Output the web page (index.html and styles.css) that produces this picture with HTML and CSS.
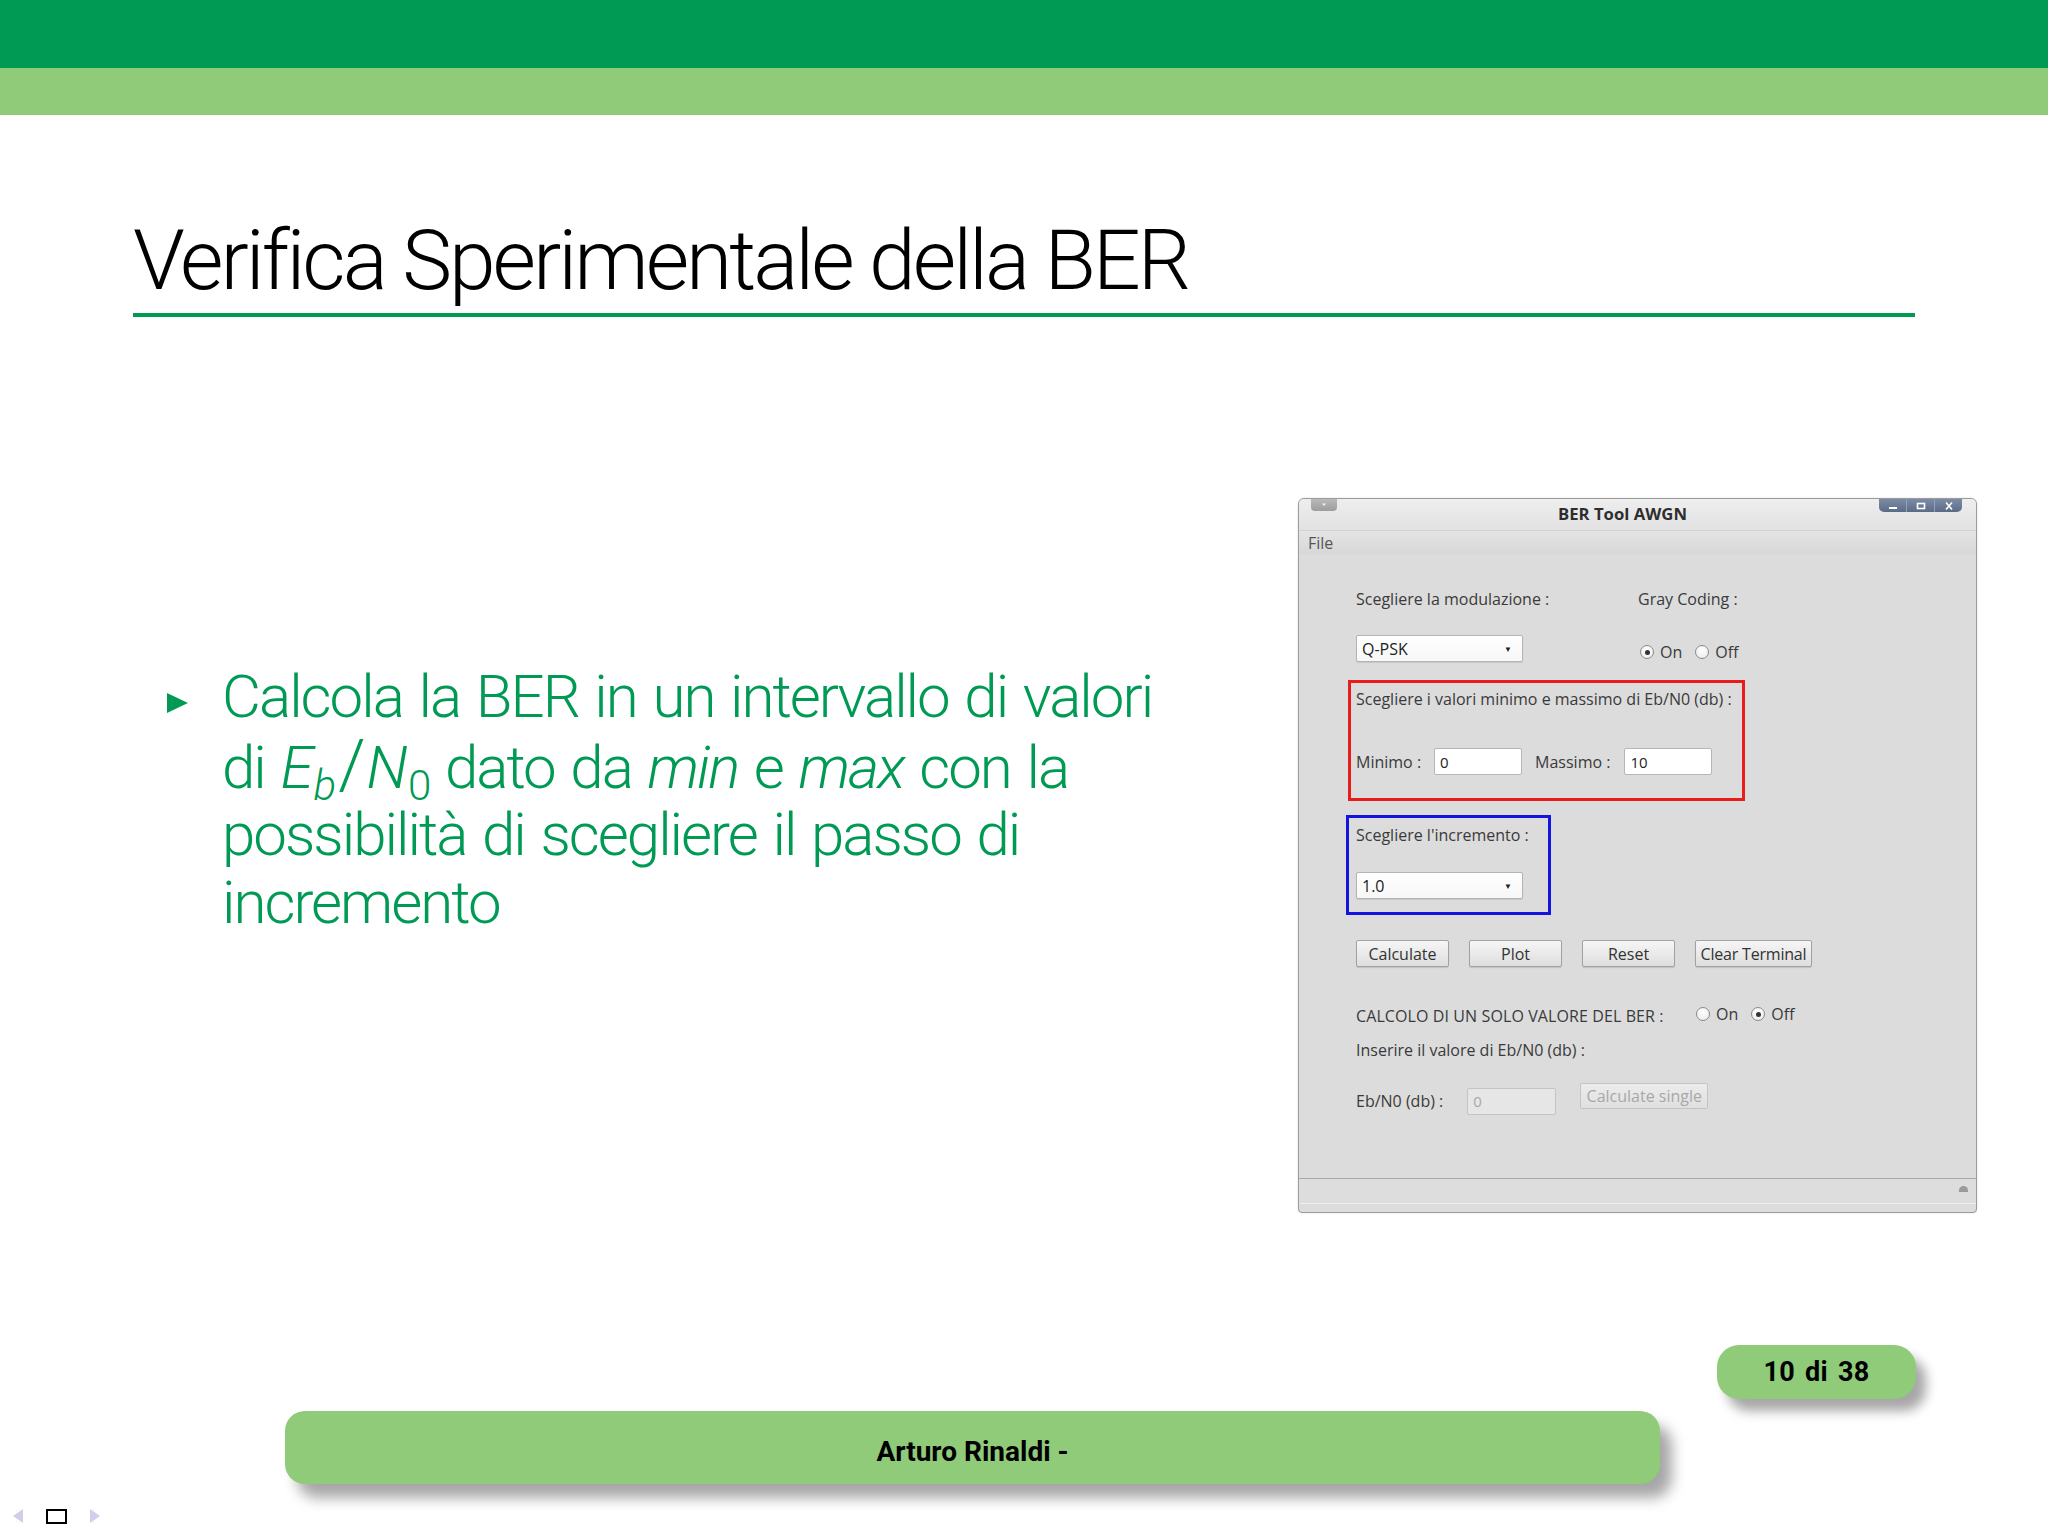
FILE: index.html
```html
<!DOCTYPE html>
<html lang="it">
<head>
<meta charset="utf-8">
<title>Verifica Sperimentale della BER</title>
<link rel="stylesheet" href="styles.css">
</head>
<body>
<div class="slide">
  <div class="hdr-dark"></div>
  <div class="hdr-light"></div>

  <div class="frametitle"><h1>Verifica Sperimentale della BER</h1></div>

  <div class="content">
    <div class="left">
      <div class="item">
        <span class="bullet"></span>
        <p>Calcola la BER in un intervallo di valori<br>di <span class="math"><i>E</i><sub><i>b</i></sub><span class="slash">/</span><i>N</i><sub>0</sub></span> dato da <i>min</i> e <i>max</i> con la<br>possibilità di scegliere il passo di<br>incremento</p>
      </div>
    </div>

    <div class="window">
      <div class="titlebar">
        <span class="tb-menu"><svg width="10" height="6" viewBox="0 0 10 6"><path d="M3 1.5 L7 1.5 L5 4 Z" fill="#f2f2f2"/></svg></span>
        <span class="tb-title">BER Tool AWGN</span>
        <span class="tb-ctrls">
          <span class="ctl"><svg width="12" height="10" viewBox="0 0 12 10"><rect x="2" y="6" width="8" height="2" fill="#fff"/></svg></span>
          <span class="ctl"><svg width="12" height="10" viewBox="0 0 12 10"><rect x="2.5" y="2.5" width="7" height="5" fill="none" stroke="#fff" stroke-width="1.6"/></svg></span>
          <span class="ctl"><svg width="12" height="10" viewBox="0 0 12 10"><path d="M3 1.5 L9 8.5 M9 1.5 L3 8.5" stroke="#fff" stroke-width="1.6"/></svg></span>
        </span>
      </div>
      <div class="menubar"><span class="menu-item">File</span></div>

      <div class="wbody">
        <div class="row row-a">
          <span class="lbl col1">Scegliere la modulazione :</span>
          <span class="lbl col2">Gray Coding :</span>
        </div>
        <div class="row row-b">
          <span class="combo"><span>Q-PSK</span><span class="arrow">▼</span></span>
          <span class="radios col2b">
            <span class="radio on"></span><span class="rlbl">On</span>
            <span class="radio"></span><span class="rlbl">Off</span>
          </span>
        </div>

        <div class="redbox">
          <div class="lbl">Scegliere i valori minimo e massimo di Eb/N0 (db) :</div>
          <div class="minmax">
            <span class="lbl">Minimo :</span>
            <span class="field f-min">0</span>
            <span class="lbl lbl-max">Massimo :</span>
            <span class="field">10</span>
          </div>
        </div>

        <div class="bluebox">
          <div class="lbl">Scegliere l'incremento :</div>
          <span class="combo combo-inc"><span>1.0</span><span class="arrow">▼</span></span>
        </div>

        <div class="buttons">
          <span class="btn">Calculate</span>
          <span class="btn">Plot</span>
          <span class="btn">Reset</span>
          <span class="btn btn-wide">Clear Terminal</span>
        </div>

        <div class="row row-calc">
          <span class="lbl lbl-caps">CALCOLO DI UN SOLO VALORE DEL BER :</span>
          <span class="radios radios-calc">
            <span class="radio"></span><span class="rlbl">On</span>
            <span class="radio on"></span><span class="rlbl">Off</span>
          </span>
        </div>
        <div class="row row-ins"><span class="lbl">Inserire il valore di Eb/N0 (db) :</span></div>
        <div class="row row-eb">
          <span class="lbl">Eb/N0 (db) :</span>
          <span class="field field-dis">0</span>
          <span class="btn btn-dis">Calculate single</span>
        </div>
      </div>

      <div class="statusbar"><span class="grip"></span></div>
    </div>
  </div>

  <div class="footer">
    <div class="pill-row"><span class="pill">10 di 38</span></div>
    <div class="bar">Arturo Rinaldi -</div>
    <div class="nav">
      <svg width="12" height="16" viewBox="0 0 12 16"><path d="M11 1 L1 8 L11 15 Z" fill="#cfcfea"/></svg>
      <span class="nav-box"></span>
      <svg width="12" height="16" viewBox="0 0 12 16"><path d="M1 1 L11 8 L1 15 Z" fill="#cfcfea"/></svg>
    </div>
  </div>
</div>
</body>
</html>
```

FILE: styles.css
```css
html, body {
  margin: 0;
  padding: 0;
  background: #ffffff;
}
body {
  width: 2048px;
  height: 1536px;
  overflow: hidden;
  font-family: Roboto, "Liberation Sans", sans-serif;
}
.slide {
  width: 2048px;
  height: 1536px;
  display: flex;
  flex-direction: column;
}
.hdr-dark {
  height: 68px;
  background: #009a54;
}
.hdr-light {
  height: 47px;
  background: #8fcb78;
}
.frametitle {
  margin: 0 133px;
  padding-top: 104px;
  border-bottom: 4px solid #009a54;
  height: 94px;
}
.frametitle h1 {
  margin: 0;
  font-weight: 300;
  font-size: 84px;
  line-height: 84px;
  letter-spacing: -3px;
  color: #000;
}

/* content */
.content {
  display: flex;
  align-items: flex-start;
  padding-top: 181px;
  height: 715px;
}
.left {
  flex: 1;
  padding-left: 167px;
  padding-top: 165px;
}
.item {
  display: flex;
  align-items: flex-start;
}
.bullet {
  width: 0;
  height: 0;
  border-top: 10px solid transparent;
  border-bottom: 10px solid transparent;
  border-left: 21px solid #009a54;
  margin-top: 30px;
  margin-right: 34px;
  flex: none;
}
.item p {
  margin: 0;
  white-space: nowrap;
  font-size: 60px;
  line-height: 67.5px;
  color: #009a54;
  font-weight: 300;
  letter-spacing: -2px;
  word-spacing: 3px;
}
.math i {
  margin-right: 1px;
}
.math sub {
  font-size: 0.7em;
  vertical-align: -0.3em;
  line-height: 0;
  margin-left: 1px;
}
.math .slash {
  font-size: 1.15em;
  margin: 0 3px;
}

/* window */
.window {
  width: 677px;
  height: 713px;
  margin-right: 71px;
  border: 1px solid #9c9c9c;
  border-radius: 6px 6px 4px 4px;
  background: #dcdcdc;
  display: flex;
  flex-direction: column;
  font-family: "Open Sans", "Liberation Sans", sans-serif;
  font-size: 16px;
  color: #3a3a3a;
  box-shadow: 0 0 2px rgba(0,0,0,0.15);
  overflow: hidden;
}
.titlebar {
  height: 31px;
  background: linear-gradient(#eeeeee, #e2e2e2);
  display: flex;
  align-items: flex-start;
  position: relative;
}
.tb-menu {
  margin-left: 12px;
  width: 26px;
  height: 12px;
  background: linear-gradient(#b9b9b9, #9d9d9d);
  border-radius: 0 0 4px 4px;
  display: flex;
  justify-content: center;
  align-items: center;
}
.tb-title {
  position: absolute;
  left: 0;
  right: 30px;
  top: 4px;
  text-align: center;
  font-weight: 700;
  font-size: 16.7px;
  line-height: 22px;
  color: #2e2e2e;
}
.tb-ctrls {
  margin-left: auto;
  margin-right: 14px;
  display: flex;
  height: 13px;
  background: linear-gradient(#7d8ca6, #5b6b86);
  border-radius: 0 0 5px 5px;
  overflow: hidden;
}
.ctl {
  width: 27px;
  display: flex;
  justify-content: center;
  align-items: center;
  border-left: 1px solid #8fa0ba;
}
.ctl:first-child { border-left: none; }
.menubar {
  height: 23px;
  background: linear-gradient(#e4e4e4, #d8d8d8);
  border-top: 1px solid #d2d2d2;
  display: flex;
  align-items: center;
}
.menu-item {
  margin-left: 9px;
  font-size: 16px;
  line-height: 20px;
  color: #555;
}

.wbody {
  padding-left: 49px;
  display: flex;
  flex-direction: column;
  align-items: flex-start;
}
.lbl {
  white-space: nowrap;
  line-height: 20px;
  color: #3a3a3a;
}
.row {
  display: flex;
  align-items: center;
  position: relative;
  width: 600px;
}
.row-a {
  margin-top: 32px;
  height: 26px;
}
.col1 { margin-left: 8px; }
.col2 {
  position: absolute;
  left: 290px;
}
.row-b {
  margin-top: 23px;
  height: 27px;
}
.combo {
  margin-left: 8px;
  background: linear-gradient(#ffffff, #f7f7f7);
  border: 1px solid #b4b4b4;
  border-radius: 2px;
  display: flex;
  align-items: center;
  justify-content: space-between;
  padding: 0 10px 0 5px;
  box-sizing: border-box;
  width: 167px;
  height: 27px;
  font-size: 16px;
  color: #222;
  box-shadow: 0 1px 1px rgba(0,0,0,0.1);
}
.arrow {
  font-size: 8px;
  color: #222;
}
.radios {
  display: flex;
  align-items: center;
}
.col2b {
  position: absolute;
  left: 292px;
  top: 7px;
}
.radio {
  width: 12px;
  height: 12px;
  border: 1px solid #8a8a8a;
  border-radius: 50%;
  background: radial-gradient(circle at 50% 35%, #ffffff, #e9e9e9);
  display: inline-flex;
  justify-content: center;
  align-items: center;
  box-sizing: content-box;
}
.radio.on::after {
  content: "";
  width: 5px;
  height: 5px;
  border-radius: 50%;
  background: #333;
}
.rlbl {
  margin-left: 6px;
  margin-right: 13px;
  font-size: 16px;
  line-height: 20px;
  color: #3a3a3a;
}

.redbox {
  margin-top: 18px;
  width: 397px;
  height: 121px;
  border: 3px solid #e81c1c;
  box-sizing: border-box;
  padding: 6px 0 0 5px;
}
.minmax {
  margin-top: 39px;
  display: flex;
  align-items: center;
}
.field {
  width: 88px;
  height: 27px;
  box-sizing: border-box;
  background: #fff;
  border: 1px solid #b6b6b6;
  border-radius: 2px;
  padding-left: 5px;
  display: inline-flex;
  align-items: center;
  font-size: 15px;
  color: #222;
}
.f-min { margin-left: 13px; }
.lbl-max { margin-left: 13px; margin-right: 14px; }

.bluebox {
  margin-top: 14px;
  margin-left: -2px;
  width: 205px;
  height: 100px;
  border: 3px solid #1414e0;
  box-sizing: border-box;
  padding: 7px 0 0 7px;
}
.combo-inc {
  margin-left: 0;
  margin-top: 27px;
}

.buttons {
  margin-top: 25px;
  margin-left: 8px;
  display: flex;
  gap: 20px;
}
.btn {
  width: 93px;
  height: 27px;
  box-sizing: border-box;
  display: inline-flex;
  justify-content: center;
  align-items: center;
  background: linear-gradient(#f6f6f6, #dedede);
  border: 1px solid #a2a2a2;
  border-radius: 2px;
  font-size: 16px;
  color: #333;
  white-space: nowrap;
  box-shadow: 0 1px 1px rgba(0,0,0,0.12);
}
.btn-wide { width: 117px; letter-spacing: -0.2px; }

.row-calc {
  margin-top: 36px;
  height: 26px;
}
.row-calc .lbl { margin-left: 8px; }
.lbl-caps { letter-spacing: 0.1px; }
.radios-calc {
  position: absolute;
  left: 348px;
  top: 1px;
}
.row-ins {
  margin-top: 8px;
  height: 26px;
}
.row-ins .lbl { margin-left: 8px; }
.row-eb {
  margin-top: 19px;
  height: 31px;
}
.row-eb .lbl { margin-left: 8px; margin-top: 6px; }
.field-dis {
  margin-left: 24px;
  margin-top: 7px;
  width: 89px;
  background: #e6e6e6;
  border-color: #c4c4c4;
  color: #a8a8a8;
}
.btn-dis {
  margin-left: 24px;
  margin-top: -4px;
  width: 128px;
  height: 26px;
  color: #a8a8a8;
  background: linear-gradient(#ececec, #e0e0e0);
  border-color: #c4c4c4;
  box-shadow: none;
}

.statusbar {
  margin-top: auto;
  height: 24px;
  margin-bottom: 8px;
  border-top: 1px solid #a9a9a9;
  border-bottom: 1px solid #efefef;
  background: #dddddd;
  display: flex;
  justify-content: flex-end;
  align-items: center;
}
.grip {
  width: 9px;
  height: 6px;
  border-radius: 5px 5px 0 0;
  background: #9a9a9a;
  margin-right: 8px;
  margin-top: -4px;
}

/* footer */
.footer {
  margin-top: auto;
  display: flex;
  flex-direction: column;
}
.pill-row {
  display: flex;
  justify-content: flex-end;
  padding-right: 132px;
}
.pill {
  width: 199px;
  height: 54px;
  border-radius: 22px;
  background: #8fcb78;
  display: flex;
  justify-content: center;
  align-items: center;
  font-weight: 700;
  font-size: 27px;
  color: #000;
  box-shadow: 10px 12px 12px rgba(0,0,0,0.35);
  letter-spacing: 0.3px;
  word-spacing: 3px;
}
.bar {
  margin: 12px 0 0 285px;
  width: 1375px;
  height: 73px;
  box-sizing: border-box;
  padding-top: 7px;
  border-radius: 20px;
  background: #8fcb78;
  display: flex;
  justify-content: center;
  align-items: center;
  font-weight: 700;
  font-size: 28px;
  color: #000;
  box-shadow: 12px 14px 14px rgba(0,0,0,0.35);
}
.nav {
  height: 52px;
  display: flex;
  align-items: center;
  padding-left: 12px;
  padding-top: 12px;
  box-sizing: border-box;
  gap: 22px;
}
.nav-box {
  width: 17px;
  height: 11px;
  border: 2px solid #000;
}
```
